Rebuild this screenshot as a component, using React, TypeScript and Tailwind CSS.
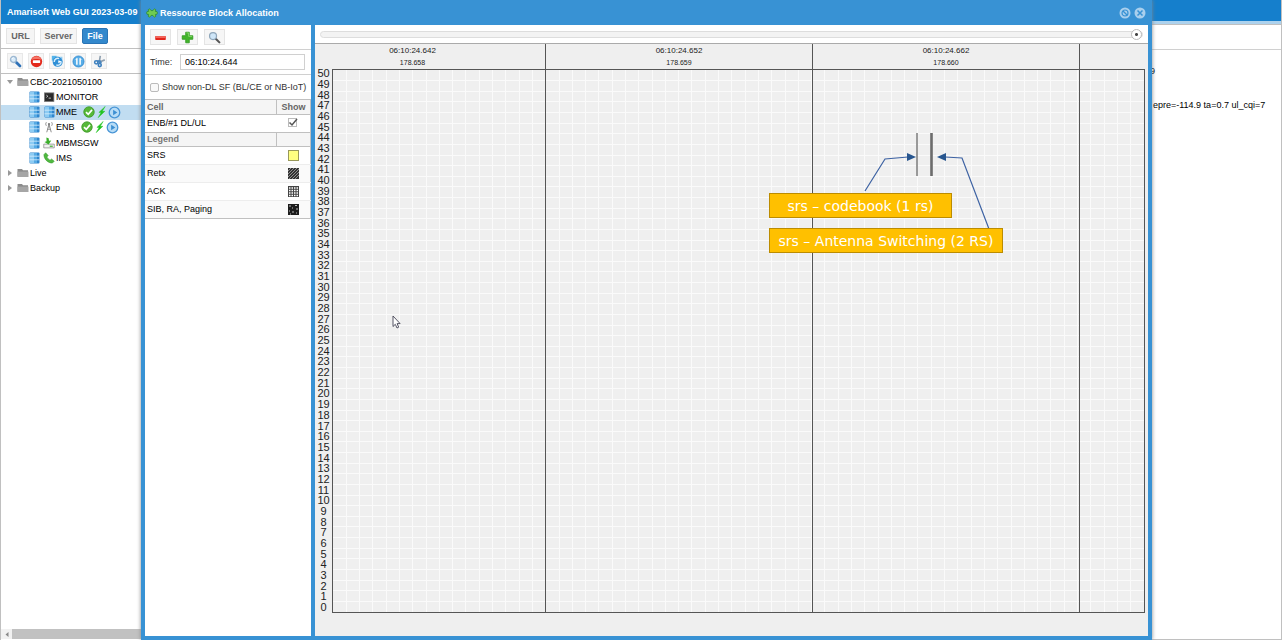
import React from 'react';

const ROWS = 51;
const COLS = 61;

const rowLabels = Array.from({ length: ROWS }, (_, i) => ROWS - 1 - i);

const frames = [
  { time: '06:10:24.642', sfn: '178.658', cell: 'w-[213px] pr-[53px]' },
  { time: '06:10:24.652', sfn: '178.659', cell: 'w-[267px]' },
  { time: '06:10:24.662', sfn: '178.660', cell: 'w-[267px]' },
];

function SearchIcon() {
  return (
    <svg width="13" height="13" viewBox="0 0 16 16">
      <path d="M8.5 8.5l5 5" stroke="#2f72b8" strokeWidth="3.4" strokeLinecap="round" />
      <circle cx="5.5" cy="5.5" r="3.6" fill="#d9ecfb" stroke="#9db9d3" strokeWidth="1.8" />
      <path d="M3.6 5a2.2 2.2 0 0 1 2-1.7" stroke="#fff" strokeWidth="1.2" fill="none" />
    </svg>
  );
}

function ZoomIcon() {
  return (
    <svg width="13" height="13" viewBox="0 0 16 16">
      <path d="M9.5 9.5l4.5 4.5" stroke="#555" strokeWidth="2.6" strokeLinecap="round" />
      <circle cx="6.2" cy="6.2" r="4.3" fill="#cfe6f8" stroke="#8fa6ba" strokeWidth="1.5" />
    </svg>
  );
}

function StopIcon() {
  return (
    <svg width="13" height="13" viewBox="0 0 16 16">
      <circle cx="8" cy="8" r="7" fill="#e3291c" />
      <path d="M2 6a6.3 6.3 0 0 1 12 0c-3-1.4-9-1.4-12 0z" fill="#f4776a" />
      <rect x="3.5" y="6.5" width="9" height="3.2" rx="0.6" fill="#fff" />
    </svg>
  );
}

function ReloadIcon() {
  return (
    <svg width="13" height="13" viewBox="0 0 16 16">
      <path d="M1 1h6v6H1z" fill="#55b4ea" />
      <path d="M6 2a6 6 0 0 1 8 4.5V2" fill="#8fcdf2" />
      <circle cx="8.2" cy="8.4" r="6.2" fill="#2f8fd6" />
      <path d="M4 8.500a4.300 4.300 0 0 1 6-4M12.500 8a4.300 4.300 0 0 1-6 4.200" stroke="#d6eefc" strokeWidth="1.8" fill="none" />
      <path d="M9 6.500l4 1.600-4 1.900z" fill="#fff" />
    </svg>
  );
}

function PauseIcon() {
  return (
    <svg width="13" height="13" viewBox="0 0 16 16">
      <circle cx="8" cy="8" r="6.8" fill="#58aee8" stroke="#2f86cb" />
      <path d="M6 4v8M10 4v8" stroke="#fff" strokeWidth="1.8" />
      <path d="M4.500 6L6 4.500M11.500 6L10 4.500" stroke="#fff" />
    </svg>
  );
}

function PlugIcon() {
  return (
    <svg width="13" height="13" viewBox="0 0 16 16">
      <path d="M9 1l-1 6M14.500 6L8 8.500" stroke="#8fa0b0" strokeWidth="2" />
      <path d="M5 6.500l4-.5 2 3.500-3.500 1.500z" fill="#4b86bd" />
      <circle cx="4" cy="9" r="2" fill="none" stroke="#3c7fbe" strokeWidth="1.9" />
      <circle cx="8.300" cy="12.400" r="1.900" fill="none" stroke="#3c7fbe" strokeWidth="1.900" />
    </svg>
  );
}

function MinusIcon() {
  return (
    <svg width="13" height="13" viewBox="0 0 16 16">
      <rect x="1.5" y="6" width="13" height="5" rx="0.8" fill="#e2231a" />
      <rect x="2" y="6.5" width="12" height="1.8" fill="#f77b70" />
    </svg>
  );
}

function PlusIcon() {
  return (
    <svg width="13" height="13" viewBox="0 0 16 16">
      <path d="M5.8 1.5h4.4v4.3h4.3v4.4h-4.3v4.3H5.8v-4.3H1.5V5.8h4.3z" fill="#43b52b" stroke="#2f9820" />
      <path d="M6.6 2.4h2.8v4.2h4.2" stroke="#93dd76" fill="none" />
    </svg>
  );
}

function PuzzleIcon() {
  return (
    <svg width="12" height="12" viewBox="0 0 16 16">
      <path
        d="M3 3.500q1.500-2 3 0 .5 1.500 2 1.500t2-1.500q1.500-2 3 0l-.5 2.500h2q1.500 2 0 3.800h-2l.5 2.700q-1.500 2-3 0-.5-1.500-2-1.500t-2 1.500q-1.500 2-3 0L3.500 9.800h-2q-1.500-1.800 0-3.800h2z"
        fill="#6fcb52"
        stroke="#2d8b2a"
        strokeWidth="1"
      />
    </svg>
  );
}

function ServerIcon() {
  return (
    <svg width="11" height="12" viewBox="0 0 11 12" className="shrink-0">
      <rect x="0.5" y="0.5" width="10" height="11" rx="1" fill="#2f86cd" />
      <rect x="1" y="1" width="4" height="10" fill="#8ccbf3" />
      <rect x="5" y="1" width="3" height="10" fill="#55aae4" />
      <path d="M0.5 4.2h10M0.5 7.800h10" stroke="#d8eefb" strokeWidth="0.8" />
    </svg>
  );
}

function FolderIcon() {
  return (
    <svg width="12" height="10" viewBox="0 0 12 10" className="shrink-0">
      <path d="M0.5 1h4.500l1 1.200h5V8.500H0.500z" fill="#8c8c8c" />
      <path d="M0.5 3.600h11v5.400h-11z" fill="#a6a6a6" />
    </svg>
  );
}

function TerminalIcon() {
  return (
    <svg width="12" height="12" viewBox="0 0 16 16">
      <rect x="2" y="2.5" width="12.5" height="11.5" fill="#2b2b2b" stroke="#777" />
      <path d="M4.500 5.500l2 1.500-2 1.500M7.500 9.500h3" stroke="#eee" fill="none" />
    </svg>
  );
}

function AntennaIcon() {
  return (
    <svg width="12" height="12" viewBox="0 0 16 16">
      <path d="M8 4L5 15M8 4l3 11M6 11h4M7 8h2" stroke="#8a8a8a" strokeWidth="1.3" />
      <circle cx="8" cy="4" r="1.4" fill="#777" />
      <path d="M4.5 1.5q-2 2.5 0 5M11.5 1.5q2 2.5 0 5" stroke="#999" fill="none" strokeWidth="1.3" />
    </svg>
  );
}

function DownloadIcon() {
  return (
    <svg width="12" height="12" viewBox="0 0 16 16">
      <path d="M1 9.500h14v5H1z" fill="#f2f2f2" stroke="#8a8a8a" />
      <path d="M4.500 0.500l3 1 0.500 3.500 3-.5L7.500 10 2 6.500l2.800-.8z" fill="#3cae2c" />
      <path d="M9 12.300h4" stroke="#3cae2c" strokeWidth="1.6" />
    </svg>
  );
}

function PhoneIcon() {
  return (
    <svg width="12" height="12" viewBox="0 0 16 16">
      <path
        d="M3.5 1L1.2 3.5c0 6 5.3 11.3 11.3 11.3l2.500-2.500-3.600-3-2 1.600C7.5 10 6 8.500 5.200 6.700l1.700-2z"
        fill="#4fb840"
        stroke="#379a2c"
        strokeWidth="0.7"
      />
    </svg>
  );
}

function StatusIcons() {
  return (
    <span className="ml-[6px] flex items-center">
      <svg width="12" height="12" viewBox="0 0 16 16">
        <circle cx="8" cy="8" r="7" fill="#56b838" stroke="#3a9424" />
        <path d="M4 8.200l3 3 5-6" stroke="#fff" strokeWidth="2.2" fill="none" />
      </svg>
      <svg width="13" height="12" viewBox="0 0 16 16">
        <path d="M13 0.5L4.500 8.500h3L3.500 15.500 12.500 7H9z" fill="#1fc41f" stroke="#1fc41f" strokeWidth="0.6" />
      </svg>
      <svg width="13" height="13" viewBox="0 0 16 16">
        <circle cx="8" cy="8" r="6.5" fill="#b7dcf6" stroke="#4996d6" strokeWidth="1.6" />
        <path d="M6.300 4.500L11.500 8l-5.200 3.500z" fill="#3d8fd2" />
      </svg>
    </span>
  );
}

const components = [
  { name: 'MONITOR', icon: <TerminalIcon /> },
  { name: 'MME', icon: <ServerIcon />, selected: true, running: true },
  { name: 'ENB', icon: <AntennaIcon />, running: true },
  { name: 'MBMSGW', icon: <DownloadIcon /> },
  { name: 'IMS', icon: <PhoneIcon /> },
];

const tools = [
  { label: 'Search', icon: <SearchIcon /> },
  { label: 'Stop', icon: <StopIcon /> },
  { label: 'Reload', icon: <ReloadIcon /> },
  { label: 'Pause', icon: <PauseIcon /> },
  { label: 'Disconnect', icon: <PlugIcon /> },
];

const zoomTools = [
  { label: 'Zoom out', icon: <MinusIcon /> },
  { label: 'Zoom in', icon: <PlusIcon /> },
  { label: 'Zoom', icon: <ZoomIcon /> },
];

function Swatch({ kind }: { kind: string }) {
  return (
    <svg width="11" height="11" viewBox="0 0 11 11" className="mx-auto">
      {kind === 'srs' && <rect x="0.5" y="0.5" width="10" height="10" fill="#ffff80" stroke="#99995a" />}
      {kind === 'retx' && (
        <>
          <rect width="11" height="11" fill="#333" />
          <path d="M0 3L3 0M0 6L6 0M0 9L9 0M1 11L11 1M4 11l7-7M7 11l4-4" stroke="#aaa" strokeWidth="0.8" />
        </>
      )}
      {kind === 'ack' && (
        <>
          <rect width="11" height="11" fill="#444" />
          <path d="M1 2h9M1 4.5h9M1 7h9M1 9.5h9" stroke="#fff" strokeWidth="1.5" strokeDasharray="1.5 1" />
        </>
      )}
      {kind === 'sib' && (
        <>
          <rect width="11" height="11" fill="#1c1c1c" />
          <path d="M1 2h2M7 1.5h2M4 4h1M8 5h2M1 7h1M4 8h2M8 9h1M2 10h1" stroke="#bbb" />
        </>
      )}
    </svg>
  );
}

const legend = [
  { name: 'SRS', kind: 'srs' },
  { name: 'Retx', kind: 'retx' },
  { name: 'ACK', kind: 'ack' },
  { name: 'SIB, RA, Paging', kind: 'sib' },
];

function TreeArrow({ open }: { open?: boolean }) {
  return (
    <svg width="6" height="6" viewBox="0 0 6 6" className="mr-1 shrink-0">
      <path d={open ? 'M0 1h6L3 5z' : 'M1 0l4 3-4 3z'} fill="#999" />
    </svg>
  );
}

function Sidebar() {
  return (
    <aside className="flex w-[141px] shrink-0 flex-col border-l border-[#c0c0c0] bg-white">
      <header className="flex h-6 shrink-0 items-center whitespace-nowrap bg-[#157fcc] pl-[6px] font-bold text-white">
        Amarisoft Web GUI 2023-03-09
      </header>
      <nav className="flex h-[25px] shrink-0 items-center gap-[5px] border-b border-[#c0c0c0] pl-[5px] font-bold text-[#666]">
        <button className="h-4 w-[29px] border border-[#e4e4e4] bg-[#f5f5f5]">URL</button>
        <button className="h-4 w-[37px] border border-[#e4e4e4] bg-[#f5f5f5]">Server</button>
        <button className="h-4 w-[26px] rounded-xs border border-[#2a74b5] bg-[#3388cc] text-white">File</button>
      </nav>
      <div className="flex h-[25px] shrink-0 items-center gap-[5px] border-b border-[#c0c0c0] pl-[6px]">
        {tools.map((tool) => (
          <button
            key={tool.label}
            aria-label={tool.label}
            className="flex size-4 items-center justify-center border border-[#e8e8e8] bg-[#f6f6f6]"
          >
            {tool.icon}
          </button>
        ))}
      </div>
      <ul className="flex h-[122px] shrink-0 flex-col text-black">
        <li className="flex flex-1 items-center pl-[6px]">
          <TreeArrow open />
          <FolderIcon />
          <span className="ml-px">CBC-2021050100</span>
        </li>
        {components.map((item) => (
          <li
            key={item.name}
            className={`flex flex-1 items-center pl-[28px] ${item.selected ? 'bg-[#c1ddf1]' : ''}`}
          >
            <ServerIcon />
            <span className="ml-0.5 flex w-[14px] justify-center">{item.icon}</span>
            <span>{item.name}</span>
            {item.running && <StatusIcons />}
          </li>
        ))}
        {['Live', 'Backup'].map((name) => (
          <li key={name} className="flex flex-1 items-center pl-[6px]">
            <TreeArrow />
            <FolderIcon />
            <span className="ml-px">{name}</span>
          </li>
        ))}
      </ul>
      <div className="mt-auto mb-px flex h-[10px] items-center bg-[#c1c1c1]">
        <span className="flex h-full w-[11px] items-center justify-center bg-[#f1f1f1]">
          <svg width="4" height="5" viewBox="0 0 4 5">
            <path d="M3.5 0v5L0.5 2.5z" fill="#888" />
          </svg>
        </span>
      </div>
    </aside>
  );
}

function Settings() {
  return (
    <section className="w-[166px] shrink-0 bg-white">
      <div className="flex h-[25px] items-center gap-[6px] border-b border-[#d0d0d0] pl-[5px]">
        {zoomTools.map((tool) => (
          <button
            key={tool.label}
            aria-label={tool.label}
            className="flex h-4 w-[21px] items-center justify-center border border-[#e4e4e4] bg-[#f6f6f6]"
          >
            {tool.icon}
          </button>
        ))}
      </div>
      <div className="flex h-[25px] items-center border-b border-[#d0d0d0] pl-[5px]">
        <label htmlFor="time" className="w-[30px]">
          Time:
        </label>
        <input
          id="time"
          defaultValue="06:10:24.644"
          className="h-4 w-[125px] border border-[#d0d0d0] px-1 text-black outline-none"
        />
      </div>
      <label className="flex h-[24px] items-center whitespace-nowrap pl-[5px]">
        <input type="checkbox" className="mr-[3px] size-[9px] appearance-none rounded-xs border border-[#bbb] bg-[#f9f9f9]" />
        Show non-DL SF (BL/CE or NB-IoT)
      </label>
      <table className="w-full table-fixed border-collapse border-r border-[#c0c0c0] text-black">
        <thead>
          <tr className="h-[15px] border-y border-[#c0c0c0] bg-[#f5f5f5] text-[#666]">
            <th className="border-r border-[#c0c0c0] p-0 pl-[2px] text-left">Cell</th>
            <th className="w-[34px] p-0">Show</th>
          </tr>
        </thead>
        <tbody>
          <tr className="h-[17px]">
            <td className="p-0 pl-[2px]">ENB/#1 DL/UL</td>
            <td className="p-0">
              <label className="relative mx-auto block size-[10px]">
                <input
                  type="checkbox"
                  defaultChecked
                  aria-label="Show ENB/#1 DL/UL"
                  className="block size-[9px] appearance-none border border-[#bbb] bg-white"
                />
                <svg className="pointer-events-none absolute inset-0" width="10" height="9" viewBox="0 0 10 9">
                  <path d="M1.5 4.5L4 7l5-6" stroke="#555" strokeWidth="1.5" fill="none" />
                </svg>
              </label>
            </td>
          </tr>
        </tbody>
      </table>
      <table className="w-full table-fixed border-collapse border-r border-b border-[#c0c0c0] text-black">
        <thead>
          <tr className="h-[14px] border-y border-[#c0c0c0] bg-[#f5f5f5] text-[#777]">
            <th className="border-r border-[#c0c0c0] p-0 pl-[2px] text-left">Legend</th>
            <th className="w-[34px] p-0" />
          </tr>
        </thead>
        <tbody>
          {legend.map((item) => (
            <tr key={item.name} className="h-[18px] border-b border-[#ededed] last:border-[#c0c0c0] even:bg-[#fafafa]">
              <td className="p-0 pl-[2px]">{item.name}</td>
              <td className="p-0">
                <Swatch kind={item.kind} />
              </td>
            </tr>
          ))}
        </tbody>
      </table>
    </section>
  );
}

function Plot() {
  return (
    <div className="relative min-w-0 flex-1 border border-[#555]">
      <svg className="absolute inset-0 size-full" shapeRendering="crispEdges">
        {Array.from({ length: COLS - 1 }, (_, i) => (
          <line key={`c${i}`} x1={`${((i + 1) * 100) / COLS}%`} x2={`${((i + 1) * 100) / COLS}%`} y1="0" y2="100%" stroke="#fafafa" />
        ))}
        {Array.from({ length: ROWS - 1 }, (_, i) => (
          <line key={`r${i}`} x1="0" x2="100%" y1={`${((i + 1) * 100) / ROWS}%`} y2={`${((i + 1) * 100) / ROWS}%`} stroke="#fafafa" />
        ))}
      </svg>
      {/* frame boundaries */}
      <div className="absolute inset-0 flex">
        {frames.map((frame) => (
          <div key={frame.time} className={`shrink-0 border-r border-[#555] ${frame.cell}`} />
        ))}
      </div>
      {/* SRS symbols, with the arrows of the callouts */}
      <svg className="absolute top-0 left-0" width="700" height="200">
        <rect x="583" y="63" width="2" height="43" fill="#999" />
        <rect x="597" y="63" width="3" height="43" fill="#858585" />
        <rect x="598" y="63" width="1" height="43" fill="#6c6c6c" />
        <path d="M532 121L552 89L575 87M656 159L629 88L612 87" stroke="#3d62a3" strokeWidth="1.2" fill="none" />
        <path d="M574 83l9 4-9 4zM613 83l-9 4 9 4z" fill="#28568f" />
      </svg>
      <div className="absolute top-[123px] left-[436px] flex h-[25px] w-[183px] items-center justify-center border border-[#bc8c00] bg-[#ffc000] font-['DejaVu_Sans',sans-serif] text-[14px] whitespace-nowrap text-white">
        srs – codebook (1 rs)
      </div>
      <div className="absolute top-[158px] left-[436px] flex h-[25px] w-[234px] items-center justify-center border border-[#bc8c00] bg-[#ffc000] font-['DejaVu_Sans',sans-serif] text-[14px] whitespace-nowrap text-white">
        srs – Antenna Switching (2 RS)
      </div>
      <svg className="absolute top-[245px] left-[59px]" width="9" height="14" viewBox="0 0 9 14">
        <path d="M1 1v10.500l2.300-2.200 1.700 3.700 1.700-.8-1.600-3.600h3z" fill="#fff" stroke="#445" strokeWidth="0.9" />
      </svg>
    </div>
  );
}

function Allocation() {
  return (
    <section className="flex min-w-0 flex-1 flex-col bg-white">
      <div className="flex h-[18px] shrink-0 items-center px-[5px]">
        <input
          type="range"
          aria-label="Position"
          defaultValue={100}
          className="h-[7px] w-full appearance-none rounded-full border border-[#ddd] bg-[#f3f3f3] [&::-webkit-slider-thumb]:size-[11px] [&::-webkit-slider-thumb]:appearance-none [&::-webkit-slider-thumb]:rounded-full [&::-webkit-slider-thumb]:border [&::-webkit-slider-thumb]:border-[#bbb] [&::-webkit-slider-thumb]:bg-[radial-gradient(circle,#444_0_1px,#fff_2px)]"
        />
      </div>
      <div className="flex flex-1 flex-col border-t border-[#aaa] bg-[#efefef] pr-[3px] pb-[23px]">
        <div className="flex h-[25px] shrink-0 pl-[18px] text-center text-[#222]">
          {frames.map((frame) => (
            <div key={frame.time} className={`shrink-0 border-r border-[#555] pt-px ${frame.cell}`}>
              <p className="text-[8px] leading-[12px]">{frame.time}</p>
              <p className="text-[7px] leading-[11px]">{frame.sfn}</p>
            </div>
          ))}
        </div>
        <div className="flex flex-1">
          <ol className="-mt-px mb-px flex w-[17px] shrink-0 flex-col text-center text-[11px] leading-[10px] text-[#222]">
            {rowLabels.map((n) => (
              <li key={n} className="flex min-h-0 flex-1 items-center justify-center">
                {n}
              </li>
            ))}
          </ol>
          <Plot />
        </div>
      </div>
    </section>
  );
}

export default function App() {
  return (
    <div className="flex h-screen overflow-hidden bg-white font-['Liberation_Sans',Arial,sans-serif] text-[9px] leading-[12px] text-[#333]">
      <Sidebar />
      <main className="z-10 flex min-w-0 flex-1 flex-col bg-[#3892d4] px-[4px] pb-[4px] shadow-[0_0_4px_#888]">
        <header className="flex h-[25px] shrink-0 items-center pr-px pl-px font-bold text-white">
          <PuzzleIcon />
          <h1 className="ml-0.5">Ressource Block Allocation</h1>
          <button aria-label="Disable" className="mr-[3px] ml-auto">
            <svg width="12" height="12" viewBox="0 0 12 12">
              <circle cx="6" cy="6" r="5.5" fill="#a9cfed" />
              <circle cx="6" cy="6" r="3" fill="none" stroke="#3892d4" strokeWidth="1.2" />
              <path d="M4 4l4 4" stroke="#3892d4" strokeWidth="1.2" />
            </svg>
          </button>
          <button aria-label="Close" className="mr-px">
            <svg width="12" height="12" viewBox="0 0 12 12">
              <circle cx="6" cy="6" r="5.5" fill="#a9cfed" />
              <path d="M3.5 3.5l5 5M8.5 3.5l-5 5" stroke="#3892d4" strokeWidth="1.5" />
            </svg>
          </button>
        </header>
        <div className="flex min-h-0 flex-1 gap-[4px]">
          <Settings />
          <Allocation />
        </div>
      </main>
      <aside className="w-[130px] shrink-0 border-r border-b border-[#c0c0c0] text-black">
        <div className="h-[21px] bg-[#157fcc]" />
        <div className="h-[4px] border-b border-[#c0c0c0] bg-[#add2ed]" />
        <div className="h-[25px] border-b border-[#d0d0d0]" />
        <p className="-ml-0.5 pt-[15px]">9</p>
        <p className="pt-[22px] pl-px whitespace-nowrap">epre=-114.9 ta=0.7 ul_cqi=7</p>
      </aside>
    </div>
  );
}
